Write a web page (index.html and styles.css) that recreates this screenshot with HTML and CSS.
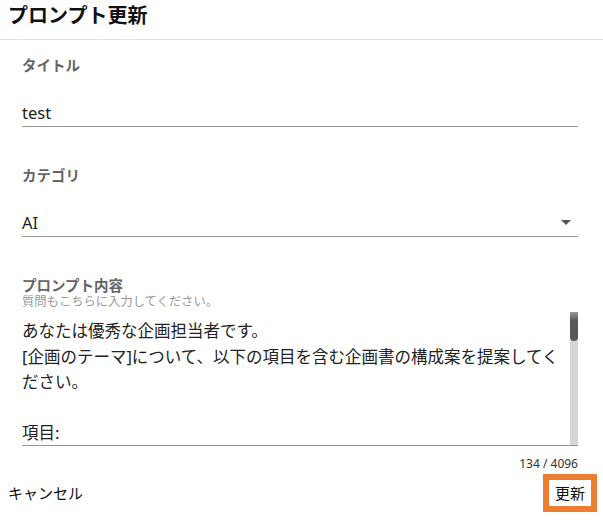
FILE: index.html
```html
<!DOCTYPE html>
<html lang="ja">
<head>
<meta charset="utf-8">
<title>プロンプト更新</title>
<link rel="stylesheet" href="styles.css">
</head>
<body>
<div class="dialog">
  <header class="dialog-header">プロンプト更新</header>
  <div class="dialog-body">
    <div class="field">
      <div class="label">タイトル</div>
      <div class="value">test</div>
    </div>
    <div class="field">
      <div class="label">カテゴリ</div>
      <div class="value select">
        <span>AI</span>
        <svg class="arrow" width="24" height="24" viewBox="0 0 24 24"><path d="M7 10l5 5 5-5z" fill="#555"/></svg>
      </div>
    </div>
    <div class="field">
      <div class="label">プロンプト内容</div>
      <div class="helper">質問もこちらに入力してください。</div>
      <div class="textarea">
        <div class="text">あなたは優秀な企画担当者です。<br>[企画のテーマ]について、以下の項目を含む企画書の構成案を提案してください。<br><br>項目:</div>
        <div class="scrollbar"><div class="thumb"></div></div>
      </div>
      <div class="counter">134 / 4096</div>
    </div>
  </div>
  <footer class="dialog-actions">
    <button class="btn">キャンセル</button>
    <button class="btn btn-primary">更新</button>
  </footer>
</div>
</body>
</html>
```
FILE: styles.css
```css
* { box-sizing: border-box; }
html, body { margin: 0; padding: 0; background: #fff; }
body {
  font-family: "Noto Sans", "Noto Sans CJK JP", sans-serif;
  color: #222;
  width: 603px;
  height: 521px;
  overflow: hidden;
}
.dialog { display: flex; flex-direction: column; }
.dialog-header {
  height: 40px;
  padding: 0 8px;
  font-size: 20px;
  font-weight: 700;
  line-height: 31px;
  color: #111;
  border-bottom: 1px solid #e0e0e0;
}
.dialog-body {
  padding: 16px 25px 0 22px;
  display: flex;
  flex-direction: column;
  gap: 39px;
}
.field { display: flex; flex-direction: column; }
.label {
  font-size: 14.5px;
  font-weight: 700;
  line-height: 18px;
  color: #666;
}
.value {
  margin-top: 26px;
  height: 27px;
  font-size: 16.5px;
  line-height: 26px;
  border-bottom: 1px solid #949494;
}
.select { display: flex; align-items: center; justify-content: space-between; }
.select span { line-height: 26px; }
.arrow { display: block; margin-top: -2px; }
.helper {
  font-size: 12.3px;
  line-height: 16px;
  color: #999;
}
.textarea {
  margin-top: 2px;
  height: 134px;
  display: flex;
  border-bottom: 1px solid #949494;
}
.text {
  flex: 1;
  overflow: hidden;
  padding-top: 6px;
  font-size: 16.5px;
  line-height: 25.6px;
  color: #222;
}
.scrollbar {
  width: 8px;
  background: linear-gradient(#f0f0f0, #d6d6d6 8px);
}
.thumb {
  height: 29px;
  background: linear-gradient(#9a9a9a, #585858 9px);
  border-radius: 0 0 4px 4px;
}
.counter {
  margin-top: 10px;
  text-align: right;
  font-size: 12px;
  line-height: 16px;
  color: #333;
}
.dialog-actions {
  margin-top: 2px;
  display: flex;
  justify-content: space-between;
  align-items: center;
  padding: 0 6px 0 8px;
  height: 38px;
}
.btn {
  font-family: "Noto Sans", "Noto Sans CJK JP", sans-serif;
  font-size: 15px;
  line-height: 26px;
  color: #111;
  background: none;
  border: 0;
  padding: 0;
  margin: 0;
}
.btn-primary {
  border: 6px solid #ed7d31;
  padding: 0 6px;
}
```
